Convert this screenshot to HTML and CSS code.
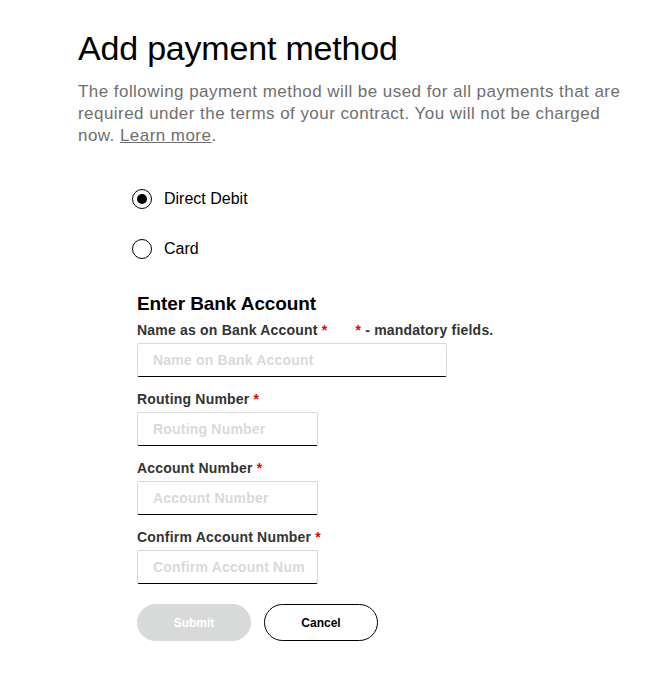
FILE: index.html
```html
<!DOCTYPE html>
<html>
<head>
<meta charset="utf-8">
<link rel="stylesheet" href="styles.css">
</head>
<body>
<div class="page">
  <h1 class="title">Add payment method</h1>
  <p class="intro">The following payment method will be used for all payments that are required under the terms of your contract. You will not be charged now. <a href="#" class="link">Learn more</a>.</p>

  <div class="radios">
    <label class="radio-row">
      <span class="radio checked"></span>
      <span class="radio-label">Direct Debit</span>
    </label>
    <label class="radio-row">
      <span class="radio"></span>
      <span class="radio-label">Card</span>
    </label>
  </div>

  <div class="form">
    <h2 class="form-title">Enter Bank Account</h2>
    <div class="label-row">
      <span class="field-label">Name as on Bank Account <span class="req">*</span></span>
      <span class="mandatory"><span class="req">*</span> - mandatory fields.</span>
    </div>
    <div class="input wide"><span class="ph">Name on Bank Account</span></div>

    <div class="field-label">Routing Number <span class="req">*</span></div>
    <div class="input"><span class="ph">Routing Number</span></div>

    <div class="field-label">Account Number <span class="req">*</span></div>
    <div class="input"><span class="ph">Account Number</span></div>

    <div class="field-label">Confirm Account Number <span class="req">*</span></div>
    <div class="input last"><span class="ph">Confirm Account Num</span></div>

    <div class="buttons">
      <button class="btn btn-submit">Submit</button>
      <button class="btn btn-cancel">Cancel</button>
    </div>
  </div>
</div>
</body>
</html>
```

FILE: styles.css
```css
html, body {
  margin: 0;
  padding: 0;
  background: #ffffff;
}
body {
  font-family: "Liberation Sans", Arial, Helvetica, sans-serif;
  color: #000;
}
.page {
  padding: 29px 20px 0 78px;
}
.title {
  margin: 0;
  font-size: 34px;
  line-height: 38px;
  font-weight: normal;
  letter-spacing: -0.2px;
  color: #000;
}
.intro {
  margin: 14px 0 0 0;
  font-size: 17px;
  line-height: 22px;
  letter-spacing: 0.45px;
  color: #6f6f6f;
  width: 556px;
}
.link {
  color: #6f6f6f;
  text-decoration: underline;
}
.radios {
  margin-top: 42px;
  padding-left: 54px;
  display: flex;
  flex-direction: column;
  gap: 30px;
}
.radio-row {
  display: flex;
  align-items: center;
  gap: 12px;
  height: 20px;
}
.radio {
  width: 18px;
  height: 18px;
  border: 1px solid #000;
  border-radius: 50%;
  display: flex;
  align-items: center;
  justify-content: center;
  box-sizing: content-box;
}
.radio.checked::after {
  content: "";
  width: 10px;
  height: 10px;
  border-radius: 50%;
  background: #000;
}
.radio-label {
  font-size: 16px;
  color: #000;
}
.form {
  margin-top: 33px;
  padding-left: 59px;
}
.form-title {
  margin: 0;
  font-size: 19px;
  line-height: 24px;
  font-weight: bold;
  letter-spacing: -0.1px;
  color: #000;
}
.label-row {
  display: flex;
  gap: 28px;
  margin-top: 6px;
}
.field-label, .mandatory {
  font-size: 14px;
  line-height: 16px;
  font-weight: bold;
  color: #333;
  letter-spacing: 0.2px;
}
.req {
  color: #ee0000;
}
.input {
  box-sizing: border-box;
  width: 181px;
  height: 34px;
  margin-top: 5px;
  margin-bottom: 14px;
  border: 1px solid #d8dada;
  border-bottom: 1px solid #000;
  border-radius: 2px;
  padding: 0 15px;
  display: flex;
  align-items: center;
  overflow: hidden;
  white-space: nowrap;
}
.input.wide {
  width: 310px;
}
.input.last {
  margin-bottom: 20px;
}
.ph {
  font-size: 14px;
  font-weight: bold;
  color: #d8dada;
  letter-spacing: 0.2px;
}
.buttons {
  display: flex;
  gap: 13px;
}
.btn {
  width: 114px;
  height: 37px;
  border-radius: 19px;
  font-family: "Liberation Sans", Arial, sans-serif;
  font-size: 12px;
  font-weight: bold;
  cursor: pointer;
}
.btn-submit {
  background: #d8dada;
  border: 1px solid #d8dada;
  color: #fff;
}
.btn-cancel {
  background: #fff;
  border: 1px solid #000;
  color: #000;
}
```
